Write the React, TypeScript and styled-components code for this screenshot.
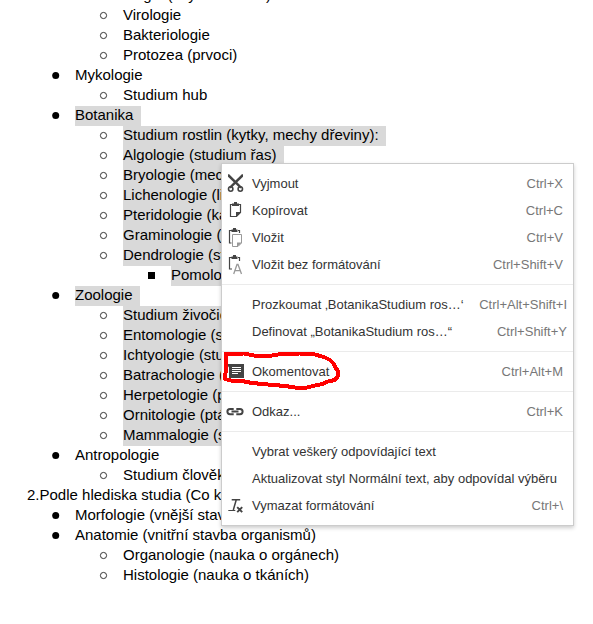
import React from "react";
import styled, { createGlobalStyle } from "styled-components";

const Global = createGlobalStyle`
  html, body { margin: 0; padding: 0; background: #fff; overflow: hidden; }
`;

const Page = styled.main`
  position: relative;
  width: 593px;
  height: 624px;
  overflow: hidden;
  background: #fff;
  font-family: "Liberation Sans", Arial, sans-serif;
  color: #000;
`;

const Outline = styled.div`
  margin-top: -14px;
`;

const Line = styled.div<{ $level: number }>`
  display: flex;
  height: 20px;
  line-height: 18px;
  font-size: 15px;
  white-space: pre;
  padding-left: ${(p) => (p.$level === 0 ? 27 : 27 + p.$level * 48 - 24)}px;
`;

const Marker = styled.svg`
  flex: none;
  width: 24px;
  height: 20px;
`;

const Content = styled.span<{ $selected?: boolean }>`
  background: ${(p) => (p.$selected ? "#d9d9d9" : "transparent")};
  padding-right: ${(p) => (p.$selected ? 3 : 0)}px;
`;

const Menu = styled.div`
  position: absolute;
  left: 221px;
  top: 163px;
  width: 351px;
  height: 349px;
  padding: 6px 0;
  background: #fff;
  border: 1px solid #ccc;
  box-shadow: 0 2px 4px rgba(0, 0, 0, 0.2);
`;

const Item = styled.div<{ $wide?: boolean }>`
  display: flex;
  align-items: center;
  height: 27px;
  padding-right: ${(p) => (p.$wide ? 6 : 10)}px;
  font-size: 13px;
  line-height: 27px;
  white-space: nowrap;
  color: #333;
`;

const IconSlot = styled.span`
  flex: none;
  display: flex;
  width: 30px;
  height: 27px;
`;

const Glyph = styled.svg`
  width: 30px;
  height: 27px;
`;

const Label = styled.span`
  flex: 1;
`;

const Shortcut = styled.span`
  color: #777;
`;

const Separator = styled.div`
  height: 1px;
  margin: 6px 0;
  background: #ebebeb;
`;

const Scribble = styled.svg`
  position: absolute;
  left: 215px;
  top: 340px;
  width: 140px;
  height: 60px;
`;

type Row = [level: number, text: string, selected?: boolean];

const rows: Row[] = [
  [1, "Mikrobiologie (viry a bakterie)"],
  [2, "Virologie"],
  [2, "Bakteriologie"],
  [2, "Protozea (prvoci)"],
  [1, "Mykologie"],
  [2, "Studium hub"],
  [1, "Botanika ", true],
  [2, "Studium rostlin (kytky, mechy dřeviny): ", true],
  [2, "Algologie (studium řas) ", true],
  [2, "Bryologie (mechorosty) ", true],
  [2, "Lichenologie (lišejníky) ", true],
  [2, "Pteridologie (kapradiny) ", true],
  [2, "Graminologie (trávy) ", true],
  [2, "Dendrologie (stromy) ", true],
  [3, "Pomologie (ovoce) ", true],
  [1, "Zoologie ", true],
  [2, "Studium živočichů ", true],
  [2, "Entomologie (studium hmyzu) ", true],
  [2, "Ichtyologie (studium ryb) ", true],
  [2, "Batrachologie (obojživelníci) ", true],
  [2, "Herpetologie (plazi) ", true],
  [2, "Ornitologie (ptáci) ", true],
  [2, "Mammalogie (savci) ", true],
  [1, "Antropologie"],
  [2, "Studium člověka"],
  [0, "2.Podle hlediska studia (Co konkrétně)"],
  [1, "Morfologie (vnější stavba)"],
  [1, "Anatomie (vnitřní stavba organismů)"],
  [2, "Organologie (nauka o orgánech)"],
  [2, "Histologie (nauka o tkáních)"],
];

function Bullet({ level }: { level: number }) {
  return (
    <Marker viewBox="0 0 24 20">
      {level === 1 && <circle cx="4.7" cy="9.6" r="3.5" fill="#000" />}
      {level === 2 && <circle cx="4.5" cy="9.5" r="3.1" fill="none" stroke="#222" strokeWidth="0.9" />}
      {level === 3 && <rect x="1" y="6" width="7" height="7" fill="#000" />}
    </Marker>
  );
}

type IconName = "cut" | "copy" | "paste" | "plain" | "comment" | "link" | "clear";

function Icon({ name }: { name: IconName }) {
  return (
    <Glyph viewBox="0 0 30 27" fill="none" stroke="#444">
      {name === "cut" && (
        <>
          <path d="M6 4.300h1.200L20 17l-1.800 1.500L6 6.800z" fill="#444" stroke="none" />
          <path d="M21 4.300h-1.200L7 17l1.800 1.500L21 6.800z" fill="#444" stroke="none" />
          <circle cx="8.7" cy="19" r="2.2" strokeWidth="1.6" />
          <circle cx="18.3" cy="19" r="2.2" strokeWidth="1.6" />
        </>
      )}
      {name === "copy" && (
        <>
          <path d="M10.500 7.500h-2v12h6l4-4v-8h-2" strokeWidth="1.200" />
          <path d="M10 9V6.500h2V5h3v1.500h2V9z" fill="#444" stroke="none" />
          <path d="M14 20v-5h5z" fill="#444" stroke="none" />
        </>
      )}
      {name === "paste" && (
        <>
          <path d="M10 6.500H7.500v12.500H9.500M16 6.500h1.500V9" strokeWidth="1.200" />
          <path d="M9.500 8V5.500H11V4h3v1.500h1.500V8z" fill="#444" stroke="none" />
          <path d="M10.500 10.500h9v8.500l-3.500 3.500h-5.500z" stroke="#999" fill="#fff" />
          <path d="M15 23v-4.500h5z" fill="#999" stroke="none" />
        </>
      )}
      {name === "plain" && (
        <>
          <path d="M10 6.500H7.500v11.500H10M16 6.500h1.500V10" strokeWidth="1.200" />
          <path d="M9.500 8V5.500H11V4h3v1.500h1.500V8z" fill="#444" stroke="none" />
          <path d="M11.700 23l3.300-9.500h1L19.500 23M13 19.700h5.500" stroke="#999" strokeWidth="1.300" />
        </>
      )}
      {name === "comment" && (
        <>
          <path d="M4.500 6H22v14H7V9.500z" fill="#444" stroke="none" />
          <path d="M10 9.500h9M10 11.500h9M10 13.500h9M10 15.500h6" stroke="#fff" />
        </>
      )}
      {name === "link" && (
        <path
          d="M11.700 11H8a2.600 2.600 0 0 0 0 5.200h3.700M14.300 11H18a2.600 2.600 0 0 1 0 5.200h-3.700M9.500 13.600h7"
          strokeWidth="2"
        />
      )}
      {name === "clear" && (
        <>
          <path d="M9.700 7.700h8.500M14.200 8l-2.900 10" strokeWidth="1.500" />
          <path d="M6.300 18.500h7" />
          <path d="M15.200 15.200l5 5M20.200 15.200l-5 5" strokeWidth="1.900" />
        </>
      )}
    </Glyph>
  );
}

interface Entry {
  label: string;
  keys?: string;
  icon?: IconName;
  wide?: boolean;
}

const groups: Entry[][] = [
  [
    { label: "Vyjmout", keys: "Ctrl+X", icon: "cut" },
    { label: "Kopírovat", keys: "Ctrl+C", icon: "copy" },
    { label: "Vložit", keys: "Ctrl+V", icon: "paste" },
    { label: "Vložit bez formátování", keys: "Ctrl+Shift+V", icon: "plain" },
  ],
  [
    { label: "Prozkoumat ‚BotanikaStudium ros…‘", keys: "Ctrl+Alt+Shift+I", wide: true },
    { label: "Definovat „BotanikaStudium ros…“", keys: "Ctrl+Shift+Y", wide: true },
  ],
  [{ label: "Okomentovat", keys: "Ctrl+Alt+M", icon: "comment" }],
  [{ label: "Odkaz...", keys: "Ctrl+K", icon: "link" }],
  [
    { label: "Vybrat veškerý odpovídající text" },
    { label: "Aktualizovat styl Normální text, aby odpovídal výběru" },
    { label: "Vymazat formátování", keys: "Ctrl+\\", icon: "clear" },
  ],
];

export default function App() {
  return (
    <Page>
      <Global />
      <Outline>
        {rows.map(([level, text, selected], i) => (
          <Line key={i} $level={level}>
            {level > 0 && <Bullet level={level} />}
            <Content $selected={selected}>{text}</Content>
          </Line>
        ))}
      </Outline>
      <Menu>
        {groups.map((group, g) => (
          <React.Fragment key={g}>
            {g > 0 && <Separator />}
            {group.map((entry) => (
              <Item key={entry.label} $wide={entry.wide}>
                <IconSlot>{entry.icon && <Icon name={entry.icon} />}</IconSlot>
                <Label>{entry.label}</Label>
                {entry.keys && <Shortcut>{entry.keys}</Shortcut>}
              </Item>
            ))}
          </React.Fragment>
        ))}
      </Menu>
      <Scribble viewBox="0 0 140 60" shapeRendering="crispEdges">
        <path
          d="M10.500 14L29 13.500L39 15.500L54 16L66 14L85 13.500L100 14.500L109 17L115 20L119 24L120 27L123 31L122.500 37L120 40L113 41.500L107 44L98 46L90 48L80 47.500L70 46L53 44.500L37 43L27 41L16 40.500L10 39L10.500 33L11 26L10.500 14"
          fill="none"
          stroke="#f00"
          strokeWidth="4"
          strokeLinejoin="round"
          strokeLinecap="round"
        />
      </Scribble>
    </Page>
  );
}
